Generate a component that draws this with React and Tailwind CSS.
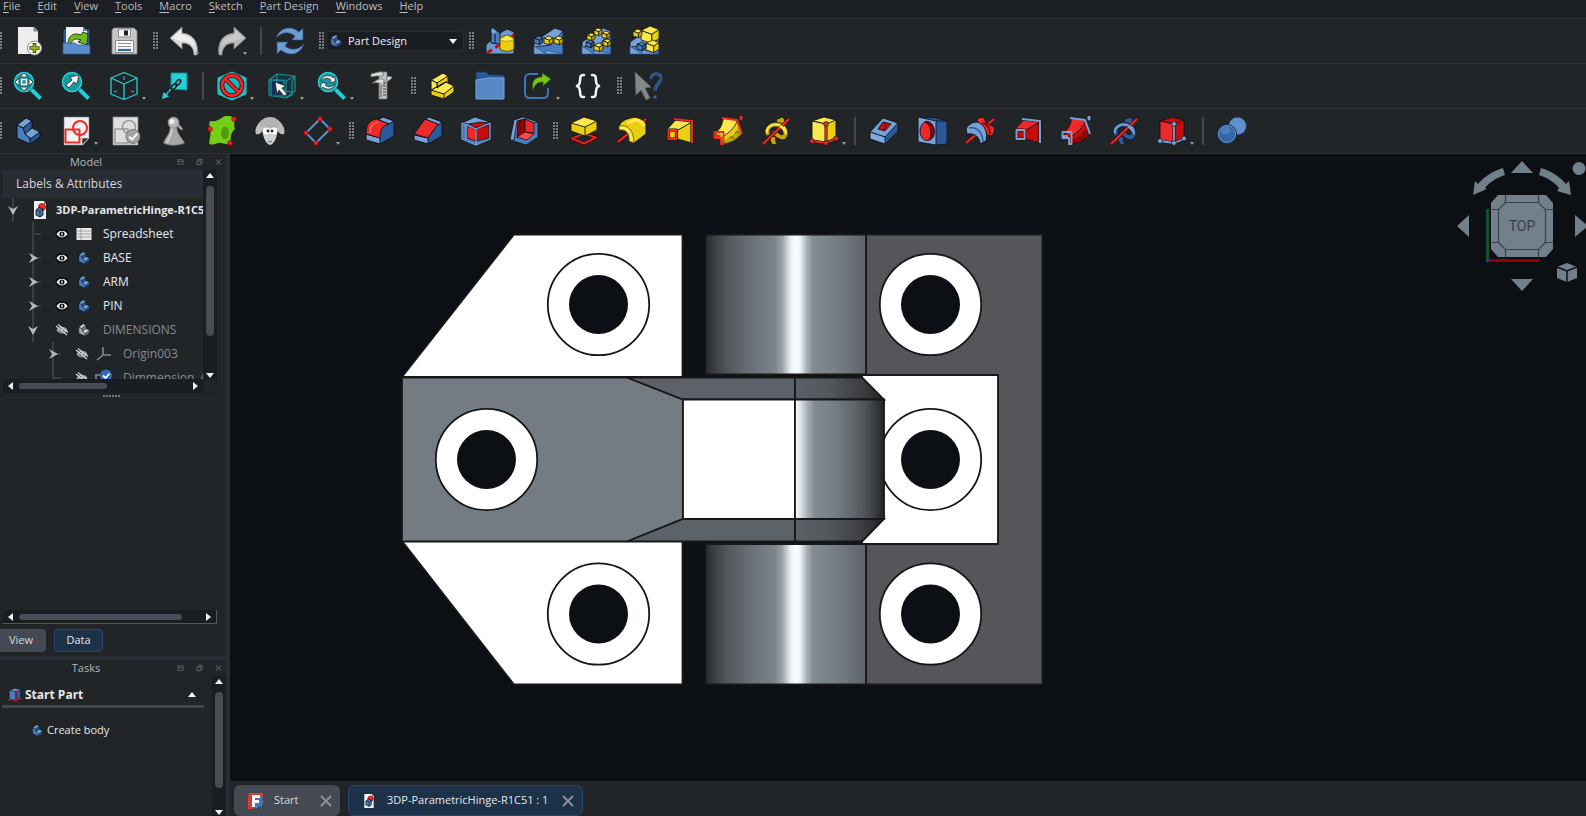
import React from "react";

const Y1 = "#fbe84e", Y2 = "#e9cf10", Y3 = "#c4a800";
const B1 = "#76a2d6", B2 = "#4a7dbd", B3 = "#2b5a9b";
const R1 = "#ef2929", R2 = "#c40c0c", R3 = "#960000";
const INK = "#10151c";
const CY = "#27cfd6";

const I = ({ children, box = 30, className = "h-[30px] w-[30px]" }) => (
  <svg viewBox={`0 0 ${box} ${box}`} className={className} fill="none" aria-hidden="true" strokeLinejoin="round">
    {children}
  </svg>
);

/* ---------- shared shapes ---------- */
const Page = ({ fill = "#f2f2f2" }) => (
  <>
    <path d="M3 1h25v21l-6 7H3z" fill={fill} stroke="#77797c" strokeWidth="0.6" />
    <path d="M28 22l-7 7v-7z" fill="#2f3336" stroke="#c9c9c9" strokeWidth="0.8" />
  </>
);
const Body = ({ a = B1, b = B2, c = B3 }) => (
  <g stroke={INK} strokeWidth="1">
    <path d="M4 9l9-7 6 3v7l8 4v4l-10 8-13-6z" fill={b} />
    <path d="M4 9l9-7 6 3-9 7z" fill={a} />
    <path d="M10 12l9-7v7l-7 6z" fill={c} />
    <path d="M12 18l7-6 8 4-9 7z" fill={a} />
    <path d="M17 23l10-7v5l-10 7z" fill={c} />
    <path d="M4 9l6 3 2 6 5 5v5L4 22z" fill={b} />
  </g>
);
const Box = ({ x, y, s, a, b, c }) => (
  <g stroke={INK} strokeWidth="0.8">
    <path d={`M${x} ${y + s * 0.25}l${s * 0.5} ${-s * 0.25} ${s * 0.5} ${s * 0.2}-${s * 0.4} ${s * 0.27}z`} fill={a} />
    <path d={`M${x} ${y + s * 0.25}l${s * 0.6} ${s * 0.22}v${s * 0.5}l-${s * 0.6}-${s * 0.2}z`} fill={b} />
    <path d={`M${x + s * 0.6} ${y + s * 0.47}l${s * 0.4}-${s * 0.27}v${s * 0.5}l-${s * 0.4} ${s * 0.27}z`} fill={c} />
  </g>
);
const Wedge = () => (
  <g stroke={INK} strokeWidth="0.8">
    <path d="M1 16L22 2l8 3v23H1z" fill={B2} />
    <path d="M1 16L22 2l8 3-12 14-17 2z" fill={B1} />
    <path d="M1 20l12 8H1zM13 24l17 4H13z" fill={B1} stroke={B3} />
  </g>
);
const Lens = ({ children }) => (
  <>
    <path d="M18.500 18.500l9 9" stroke="#0c5c66" strokeWidth="5" />
    <path d="M18.500 18.500l9 9" stroke={CY} strokeWidth="3.500" />
    <circle cx="11" cy="11" r="9.500" fill="#1898a2" stroke={CY} strokeWidth="1.600" />
    {children}
  </>
);

/* ---------- file / edit ---------- */
const NewDoc = () => (
  <I>
    <path d="M5 1h16l4 4v23H5z" fill="#ededed" />
    <path d="M21 1v4h4" fill="#9a9a9a" stroke="#555" strokeWidth="0.6" />
    <circle cx="21.500" cy="22" r="7" fill="#f7f7f7" stroke="#8a8a8a" />
    <path d="M21.500 17v10M16.500 22h10" stroke="#3c4a05" strokeWidth="3.600" />
    <path d="M21.500 18v8M17.500 22h8" stroke="#a0b810" strokeWidth="1.800" />
  </I>
);
const OpenDoc = () => (
  <I>
    <path d="M2 3h27v25H2z" fill={B3} stroke={INK} strokeWidth="0.8" />
    <path d="M5 1h17l4 4v14H5z" fill="#f1f1f1" />
    <path d="M22 1v4h4z" fill="#777" />
    <path d="M7 18C7 10 12 6 20 9l2-3 5 2-1 11-9-3 3-2c-5-2-9-1-10 4z" fill="#73b81a" stroke="#22420a" strokeWidth="1" />
    <path d="M2 17h12l3 2h12v9H2z" fill="#5b8dcb" stroke={B3} strokeWidth="0.8" />
  </I>
);
const Save = () => (
  <I>
    <path d="M5 2h20l3 3v23H3V4z" fill="#c6c6c6" stroke="#8b8b8b" strokeWidth="0.8" />
    <rect x="9.500" y="3" width="12" height="8" fill="#f4f4f4" stroke="#777" strokeWidth="0.8" />
    <rect x="15" y="4.500" width="4" height="5" fill="#222" />
    <rect x="6.500" y="14.500" width="18" height="12" fill="#fafafa" stroke="#8a8a8a" />
    <path d="M9 17.500h13M9 20.500h13" stroke="#8f8f8f" strokeWidth="1.200" />
    <path d="M9 24h13" stroke="#3568ab" strokeWidth="2.200" />
  </I>
);
const Undo = () => (
  <I>
    <path d="M1 12L13 1v6c11 1 17 9 15 22h-3c0-7-4-12-12-12v6z" fill="#d9d9d9" stroke="#8d8d8d" strokeWidth="0.8" />
    <path d="M3 12l9-8v5c8 0 13 5 14 13-3-5-7-7-14-7z" fill="#efefef" />
  </I>
);
const Redo = () => (
  <I>
    <path d="M29 12L17 1v6C6 8 0 16 2 29h3c0-7 4-12 12-12v6z" fill="#b9b9b9" stroke="#7d7d7d" strokeWidth="0.8" />
    <path d="M27 12l-9-8v5C10 9 5 14 4 22c3-5 7-7 14-7z" fill="#c9c9c9" />
  </I>
);
const Refresh = () => (
  <I>
    <g fill="#6d9bd2" stroke="#2a5288" strokeWidth="0.7">
      <path d="M1 12C5 1 16-1 24 6l4-4v12H17l3-4C13 5 7 6 1 12z" />
      <path d="M29 18C25 29 14 31 6 24l-4 4V16h11l-3 4c7 5 13 4 19-2z" />
    </g>
  </I>
);

/* ---------- workbench tools ---------- */
const Mirror = () => (
  <I>
    <path d="M1 19l5-5 9-7 7-4 7 3v22H1z" fill="#689ad2" stroke={INK} strokeWidth="0.8" />
    <path d="M7 1l4 3 4 3v11l-9-1V4z" fill={B2} stroke={INK} />
    <path d="M7 2l4 3-1 3-4-2z" fill={B1} />
    <path d="M10 8v9" stroke={INK} />
    <path d="M2 27L29 9" stroke={R2} strokeWidth="3" strokeDasharray="6 4" />
    <path d="M15 13c4-5 11-5 14 0v10c-3 3-11 3-14 0z" fill={Y2} stroke="#5a4b00" />
    <path d="M15 13l7-4 7 4c-2 3-12 3-14 0z" fill={Y1} stroke="#8a7500" strokeWidth="0.6" />
  </I>
);
const LinearPattern = () => (
  <I>
    <Wedge />
    <Box x={1} y={10} s={9} a={B2} b={B2} c={B3} />
    <Box x={11} y={10} s={9} a={Y1} b={Y2} c={Y3} />
    <Box x={21} y={10} s={9} a={Y1} b={Y2} c={Y3} />
  </I>
);
const PolarPattern = () => (
  <I>
    <Wedge />
    <Box x={13} y={2} s={8} a={Y1} b={Y2} c={Y3} />
    <Box x={6} y={7} s={8} a={Y1} b={Y2} c={Y3} />
    <Box x={21} y={5} s={8} a={Y1} b={Y2} c={Y3} />
    <Box x={22} y={13} s={8} a={Y1} b={Y2} c={Y3} />
    <Box x={5} y={14} s={8} a={B2} b={B2} c={B3} />
    <Box x={13} y={17} s={9} a={Y1} b={Y2} c={Y3} />
  </I>
);
const MultiTransform = () => (
  <I>
    <Wedge />
    <Box x={12} y={0} s={18} a={Y1} b={Y1} c={Y2} />
    <Box x={4} y={3} s={9} a={Y1} b={Y2} c={Y3} />
    <Box x={17} y={14} s={13} a={Y1} b={Y1} c={Y2} />
    <Box x={8} y={16} s={9} a={B2} b={B2} c={B3} />
  </I>
);

/* ---------- view ---------- */
const FitAll = () => (
  <I>
    <Lens>
      <path d="M11 2l4 4H7zM11 20l4-4H7zM2 11l4-4v8zM20 11l-4-4v8z" fill="#f4f4f4" stroke="#222" strokeWidth="0.8" />
      <path d="M8.500 8.500h5v5h-5z" fill="#1898a2" stroke="#f4f4f4" strokeWidth="1.500" />
    </Lens>
  </I>
);
const FitSel = () => (
  <I>
    <Lens>
      <path d="M18 4l-2 9-3-2-5 6-3-3 6-5-2-3z" fill="#f4f4f4" stroke="#222" strokeWidth="0.8" />
    </Lens>
  </I>
);
const Iso = () => (
  <I>
    <g stroke={CY} strokeWidth="1.300">
      <path d="M15 1.500l13 5.500v16L15 28.500 2 23V7z" />
      <path d="M2 7l13 6 13-6M15 13v15" />
      <path d="M15 5v4M8 20l-3 1M22 20l3 1" strokeWidth="1" />
    </g>
  </I>
);
const AlignSel = () => (
  <I>
    <path d="M12 2h16v17l-16-1z" fill={CY} stroke="#118a92" />
    <path d="M12 18l-6 7" stroke={CY} strokeWidth="1.500" />
    <path d="M13 17l-5 6" stroke="#0c4a52" strokeWidth="1" strokeDasharray="2 2" />
    <ellipse cx="19" cy="11.500" rx="1.800" ry="3.500" transform="rotate(42 19 11.500)" stroke="#111" strokeWidth="1.300" />
    <ellipse cx="15" cy="15.500" rx="1.800" ry="3.500" transform="rotate(42 15 15.500)" stroke="#111" strokeWidth="1.300" />
    <path d="M3 28l1.500-7 5.500 4.500z" fill={CY} />
  </I>
);
const DrawStyle = () => (
  <I>
    <path d="M15 1l14 6v16l-14 6L1 23V7z" fill="#1fb5bd" stroke={CY} />
    <circle cx="15" cy="14.500" r="10" stroke="#3a0000" strokeWidth="4.500" />
    <path d="M8 7.500l14 14" stroke="#3a0000" strokeWidth="4" />
    <circle cx="15" cy="14.500" r="10" stroke={R1} strokeWidth="2.800" />
    <path d="M8 7.500l14 14" stroke={R1} strokeWidth="2.600" />
  </I>
);
const SelView = () => (
  <I>
    <g stroke="#1c8f97" strokeWidth="1.200">
      <path d="M2 9l8-6 18 2-3 6v13l-6 3-17-3z" fill="#12343c" />
      <path d="M4 9h13v16H4z" fill="#15305e" />
      <path d="M2 9l17 1 9-5M19 10v17M10 3v16l15 2M28 5v15l-9 7" />
    </g>
    <path d="M8 11l11 4-4 2 5 6-3 2-5-6-2 4z" fill="#f2f2f2" stroke="#111" strokeWidth="0.7" />
  </I>
);
const SyncView = () => (
  <I>
    <Lens>
      <path d="M4 10c1-6 9-7 12-3l2-2v6h-6l2-2c-3-3-7-2-10 1zM18 13c-1 5-8 7-12 3l-2 2v-6h6l-2 2c3 3 7 2 10-1z" fill="#f4f4f4" stroke="#222" strokeWidth="0.7" />
    </Lens>
  </I>
);
const Caliper = () => (
  <I>
    <path d="M12 1h8v27h-8z" fill="#c4c4c4" stroke="#6f6f6f" strokeWidth="0.8" />
    <path d="M4 3l8-2h4v4H9L4 6zM5 12l7-4h5v7c-3-3-7-4-12-3zM20 5l5 1v1l-5 4z" fill="#dcdcdc" stroke="#6f6f6f" strokeWidth="0.8" />
    <path d="M14 14v12" stroke="#555" />
    <path d="M16 12h3M16 15h3M16 18h3M16 21h3M16 24h3" stroke="#444" />
  </I>
);
const PartIcon = () => (
  <I>
    <g stroke={INK} strokeWidth="1">
      <path d="M4 9l12-7 5 3v10L10 19l-6-3z" fill={Y2} />
      <path d="M4 9l12-7 5 3-11 7z" fill={Y1} />
      <path d="M10 12v7" />
      <path d="M4 19l15-8 8 4v6l-10 7-13-4z" fill={Y2} />
      <path d="M4 19l15-8 8 4-10 8z" fill={Y1} />
      <path d="M17 23v5" />
      <path d="M4 9l6 3v5l9-6-2 1-13 7z" fill={Y1} />
    </g>
  </I>
);
const Folder = () => (
  <I>
    <path d="M1 1h10l3 3h15v6H1z" fill={B3} stroke="#173763" />
    <path d="M1 9l13-2h15v21H1z" fill="#5788c5" stroke="#7aa7dd" strokeWidth="1" />
  </I>
);
const LinkIcon = () => (
  <I>
    <path d="M15 3H7c-3 0-5 2-5 5v14c0 3 2 5 5 5h13c3 0 5-2 5-5v-5" stroke="#4574b3" strokeWidth="2" />
    <path d="M10 19C8 10 12 6 19 6V2l9 6-8 7v-4c-5 0-8 2-10 8z" fill="#78c51b" stroke="#2c5a06" strokeWidth="0.8" />
  </I>
);
const Braces = () => (
  <I>
    <g stroke="#f2f2f2" strokeWidth="2.600" strokeLinecap="round">
      <path d="M11 4C4 3 10 13 4 15c6 2 0 12 7 11" />
      <path d="M19 4c7-1 1 9 7 11-6 2 0 12-7 11" />
    </g>
  </I>
);
const WhatsThis = () => (
  <I>
    <path d="M2 1l16 15-6 1 5 10-4 2-5-10-5 5z" fill="#85878a" stroke="#5f6265" strokeWidth="0.8" />
    <path d="M18 8c0-7 11-7 10 0-1 5-6 5-6 12M22 24.500v3" stroke="#3c69a8" strokeWidth="3" />
    <path d="M18 8c0-7 11-7 10 0-1 5-6 5-6 12" stroke="#11294c" strokeWidth="0.8" />
  </I>
);

/* ---------- part design ---------- */
const BodyIcon = () => (<I><Body /></I>);
const Sketch = () => (
  <I>
    <Page />
    <rect x="4.500" y="13.500" width="14" height="13" stroke={R1} strokeWidth="2" />
    <circle cx="19" cy="12" r="7" stroke={R1} strokeWidth="2" />
  </I>
);
const Validate = () => (
  <I>
    <path d="M2 1h25v28H2z" fill="#dedede" stroke="#8b8b8b" strokeWidth="0.7" />
    <rect x="4" y="13" width="13" height="14" stroke="#9a9a9a" strokeWidth="1.600" />
    <circle cx="18" cy="11" r="6.500" stroke="#9a9a9a" strokeWidth="1.600" />
    <circle cx="22" cy="20.500" r="7" fill="#a2a2a2" stroke="#777" />
    <path d="M18 20.500l3 3 5.500-6" stroke="#f4f4f4" strokeWidth="2.200" />
  </I>
);
const Pawn = () => (
  <I>
    <path d="M11 10C12 18 6 21 4.500 27c5 3 15 3 21 0C23 21 17 18 18 10l4 4 2-1-5-6z" fill="#a7a7a7" stroke="#777" strokeWidth="0.7" />
    <path d="M13 12c0 8-4 10-5 15" stroke="#cfcfcf" strokeWidth="2" />
    <circle cx="14.500" cy="6.500" r="5.500" fill="#b7b7b7" stroke="#808080" strokeWidth="0.7" />
    <circle cx="13" cy="5.500" r="2.500" fill="#efefef" />
  </I>
);
const SubShape = () => (
  <I>
    <path d="M3 5c5 1 9-1 13-4 3-2 8-1 12 1-1 5-1 9 0 11-4 3-5 8-4 15-6 1-9-2-13-1-3 1-7 3-9 0 1-5 2-9 1-14C2 10 2 8 3 5z" fill="#73cf16" />
    <ellipse cx="18" cy="17" rx="4" ry="6.500" fill="#56980f" />
    <g fill={R1} stroke={R3} strokeWidth="0.8">
      <circle cx="27" cy="3" r="2.300" /><circle cx="3" cy="13" r="2.300" /><circle cx="23" cy="27" r="2.300" />
    </g>
  </I>
);
const Sheep = () => (
  <I>
    <path d="M7 4c-4 3-8 9-6 14 3 1 6-1 7-5zM23 4c4 3 8 9 6 14-3 1-6-1-7-5z" fill="#bdbdbd" />
    <path d="M7 10c0 8 3 18 8 19 5-1 8-11 8-19z" fill="#cfcfcf" />
    <path d="M6 10C4 4 10 1 15 1s11 3 9 9c-2 3-4 1-5 2-2-1-3 1-5 0-3 1-6 1-8-2z" fill="#b3b3b3" />
    <circle cx="11.500" cy="15" r="3.500" fill="#fff" /><circle cx="18.500" cy="15" r="3.500" fill="#fff" />
    <circle cx="13" cy="15" r="1.400" fill="#222" /><circle cx="17" cy="15" r="1.400" fill="#222" />
    <path d="M13 25l2 1 2-1" stroke="#666" />
  </I>
);
const Datum = () => (
  <I>
    <path d="M17 3l10 10-14 14L3 17z" stroke="#5f93d4" strokeWidth="1.800" />
    <g fill={R1} stroke={R3} strokeWidth="0.8">
      <circle cx="17" cy="3" r="2.200" /><circle cx="27" cy="13" r="2.200" /><circle cx="13" cy="27" r="2.200" /><circle cx="3" cy="17" r="2.200" />
    </g>
  </I>
);
const Fillet = () => (
  <I>
    <g stroke={INK} strokeWidth="1">
      <path d="M1 18v6l14 4 14-8V6l-12-5-9 4z" fill={B3} />
      <path d="M1 18v6l14 4v-6z" fill={B1} />
      <path d="M13 4l5-3 11 4-5 3z" fill={B1} />
      <path d="M1 18C1 9 4 4 12 3l12 5c-6 1-9 6-9 14z" fill={R1} />
    </g>
    <path d="M5 17c0-6 3-10 8-11" stroke="#ff6a60" strokeWidth="1.500" />
  </I>
);
const Chamfer = () => (
  <I>
    <g stroke={INK} strokeWidth="1">
      <path d="M1 19v5l14 4 14-8V6l-12-5z" fill={B3} />
      <path d="M1 19v5l14 4v-6z" fill={B1} />
      <path d="M12 3l4-2 13 5-4 3z" fill={B1} />
      <path d="M1 18L12 3l13 5-10 14z" fill={R1} />
    </g>
  </I>
);
const Draft = () => (
  <I>
    <g stroke={INK} strokeWidth="0.8">
      <path d="M1 7l13-6 15 5v17l-14 6L1 23z" fill={B2} />
      <path d="M1 7l13-6 15 5-14 3z" fill={B1} />
      <path d="M8 8l11-2 9 1-13 5z" fill={R2} />
      <path d="M6 10l9 3v12l-9-3z" fill={R1} />
      <path d="M15 13l13-4v13l-13 3z" fill={R2} />
    </g>
    <path d="M1 7l14 6 14-6M15 13v16M1 7v16l14 6 14-6V7M5 9v15" stroke={B1} strokeWidth="1.300" />
  </I>
);
const Thickness = () => (
  <I>
    <g stroke={INK} strokeWidth="0.8">
      <path d="M5 4l9-3 15 5v15l-12 8L1 24z" fill={B2} />
      <path d="M5 4l9-3 15 5-4 1-9-4-8 2-3 19-4 0z" fill={B1} />
      <path d="M9 5l7-2v13l-8 6z" fill={R3} />
      <path d="M16 3l9 4v10l-9-1z" fill={R1} />
      <path d="M8 21l8-5 9 2-7 6z" fill="#ff4a42" />
    </g>
  </I>
);
const Pad = () => (
  <I>
    <path d="M15 17l13 4-13 7-13-5z" stroke="#5b0000" strokeWidth="3" />
    <path d="M15 17.500l12 4-12 6-12-5z" stroke={R1} strokeWidth="1.600" />
    <g stroke={INK} strokeWidth="0.9">
      <path d="M2 7l13-6 13 4v9l-12 6-14-5z" fill={Y2} />
      <path d="M2 7l13-6 13 4-12 6z" fill={Y1} /><path d="M16 11v9" />
    </g>
  </I>
);
const Revolve = () => (
  <I>
    <path d="M1 26L29 3" stroke="#5b0000" strokeWidth="3.200" />
    <path d="M1 26L29 3" stroke={R1} strokeWidth="2" />
    <path d="M2 10C4 6 7 4 10 3l7-2c7 1 11 4 12 7v10l-12 9-5-2c1-7-3-12-10-11z" fill={Y2} stroke={INK} />
    <path d="M10 7l9-3c4 1 7 3 8 6" stroke={Y1} strokeWidth="3" />
    <path d="M2 10c9-2 15 5 15 17l-5-2c1-7-3-12-10-11z" fill={Y1} stroke="#5f5000" strokeWidth="0.8" />
  </I>
);
const Loft = ({ a = Y1, b = Y2, s = R1 }) => (
  <I>
    <path d="M3 14L12 3l15 2v22l-14-4H3z" fill={b} stroke={INK} strokeWidth="0.8" />
    <path d="M3 13l9-10 14 3-13 8z" fill={a} />
    <path d="M13 14L27 6" stroke={INK} />
    <path d="M9 3l18 2v22" stroke={INK} strokeWidth="3.200" />
    <path d="M9 3l18 2v22" stroke={s} strokeWidth="2" />
    <rect x="3.500" y="14" width="8" height="9" fill={b} stroke={INK} strokeWidth="3.200" />
    <rect x="3.500" y="14" width="8" height="9" stroke={s} strokeWidth="2" />
  </I>
);
const Pipe = ({ a = Y1, b = Y2, c = Y3, s = R1 }) => (
  <I>
    <path d="M2 17C7 14 9 9 10 2l14 2 5 14c-5 4-8 9-19 10z" fill={c} stroke={INK} strokeWidth="0.8" />
    <path d="M11 20C17 16 21 11 23 5l2 6c-2 6-6 10-14 13z" fill={b} />
    <path d="M4 16c4-3 6-7 7-13l13 2c-2 6-6 11-14 15z" fill={a} />
    <path d="M11 20C17 16 22 11 24 5" stroke={INK} strokeWidth="0.8" />
    <path d="M16 22c2-2 5-1 4 1M22 17c2-2 5-1 4 1" stroke="#3d3410" strokeWidth="0.8" />
    <path d="M9 2l15 2 5 14" stroke={s} strokeWidth="2" />
    <path d="M1.500 16h9v12H8v-6H1.500zM2 20h5" stroke={s} strokeWidth="1.800" />
    <ellipse cx="28" cy="2" rx="1.500" ry="2.500" fill={s} />
  </I>
);
const Helix = ({ a = Y1, b = Y3 }) => (
  <I>
    <path d="M10 20l5 1c-1 3 0 6 1 7l-4 1c-3-3-3-6-2-9zM16 3l6-2 2 4-5 5-4-2z" fill={b} stroke={INK} strokeWidth="0.8" />
    <path d="M7 19C4 11 12 7 18 9c7 2 8 9 5 12-4 1-8-2-10-6" stroke={INK} strokeWidth="5.500" />
    <path d="M7 19C4 11 12 7 18 9c7 2 8 9 5 12-4 1-8-2-10-6" stroke={b} strokeWidth="4" />
    <path d="M6 17C5 11 12 7 18 9c5 1 7 5 7 9" stroke={a} strokeWidth="2" />
    <path d="M2 28L28 3" stroke="#5b0000" strokeWidth="3.200" />
    <path d="M2 28L28 3" stroke={R1} strokeWidth="2" />
    <path d="M19 10c2 1 4 3 5 5" stroke={a} strokeWidth="3" />
  </I>
);
const Prim = ({ a = Y1, b = Y2, c = Y1, s = R1 }) => (
  <I>
    <g stroke={INK} strokeWidth="0.9">
      <path d="M3 5l12-4 12 3v19l-10 4-14-3z" fill={b} />
      <path d="M3 5l12-4 12 3-10 4z" fill={c} /><path d="M3 5l14 3v19L3 24z" fill={a} />
    </g>
    <path d="M17 8v18M3 25l14 2 10-4" stroke={INK} strokeWidth="3" />
    <path d="M17 8v18M3 25l14 2 10-4" stroke={s} strokeWidth="1.800" />
    <g fill={s} stroke={INK} strokeWidth="0.7">
      <circle cx="17" cy="8" r="2.400" /><circle cx="3" cy="25" r="2.400" /><circle cx="17" cy="27" r="2.400" /><circle cx="27" cy="22.500" r="2.400" />
    </g>
  </I>
);
const Pocket = () => (
  <I>
    <g stroke={INK} strokeWidth="0.9">
      <path d="M1 18L14 2l15 5v8L16 28 1 23z" fill={B3} />
      <path d="M1 16L14 2l15 5-13 14z" fill={B1} />
      <path d="M1 16l15 5v7L1 23z" fill="#82aade" />
      <path d="M9 13l5-7 8 2-6 7z" fill={R2} /><path d="M16 6l1 4-3 4" />
    </g>
  </I>
);
const Hole = () => (
  <I>
    <g stroke={INK} strokeWidth="0.9">
      <path d="M1 1l18 1 11 3v23l-10 1L1 26z" fill={B3} />
      <path d="M1 1l18 4v24L1 26z" fill={B1} />
      <ellipse cx="10" cy="15" rx="7" ry="9.500" fill={R1} />
      <path d="M8 6c7 4 7 13 4 18 5-1 6-7 5-11-1-4-4-8-9-7z" fill={R3} />
      <path d="M19 5h11" />
    </g>
  </I>
);
const Groove = () => (
  <I>
    <path d="M1 27L29 3" stroke="#5b0000" strokeWidth="3.200" />
    <path d="M1 27L29 3" stroke={R1} strokeWidth="2" />
    <path d="M12 4c2-3 5-3 7-2l2 5 8 4c1 4 0 7-3 9l-8-3-6-6z" fill={R1} stroke={INK} strokeWidth="0.8" />
    <path d="M17 7c5 1 8 5 8 11" stroke={R3} strokeWidth="2" />
    <path d="M1 13C3 9 7 6 12 6c8 2 11 11 9 19l-6 3c0-7-5-11-13-10z" fill={B1} stroke={INK} />
    <path d="M4 12c8-2 14 5 14 14" stroke={B3} strokeWidth="1.500" />
  </I>
);
const Boolean2 = () => (
  <I>
    <circle cx="20.500" cy="10" r="9" fill="#5e90cd" stroke="#16335c" strokeWidth="0.8" />
    <circle cx="10" cy="18" r="9.500" fill={B3} stroke="#122a4d" />
    <circle cx="10" cy="18" r="8.500" fill="#3566a8" stroke={B1} strokeWidth="0.8" />
    <ellipse cx="8.500" cy="14.500" rx="5" ry="4" fill="#4a7dbd" />
  </I>
);

/* ---------- toolbar parts ---------- */
const Grip = ({ edge }) => (
  <svg className={edge ? "h-[18px] w-1 shrink-0" : "ml-[5px] mr-px h-[18px] w-1.5 shrink-0"} viewBox={edge ? "3 0 4 18" : "0 0 6 18"} aria-hidden="true">
    {[0, 3, 6, 9, 12, 15].map((y) => (
      <g key={y} fill="#7b7f83">
        <rect x="0" y={y} width="2" height="2" />
        <rect x="3" y={y} width="2" height="2" />
      </g>
    ))}
  </svg>
);
const Sep = () => <div className="mx-1 h-7 w-0.5 shrink-0 bg-[#43474b]" />;
const Tool = ({ icon: Icon, label, menu, overlay }) => (
  <button type="button" aria-label={label} className={`relative flex h-10 shrink-0 items-center ${menu ? "w-[50px]" : "w-12"}`}>
    <span className="flex w-12 justify-center"><Icon /></span>
    {(menu || overlay) && (
      <svg viewBox="0 0 4 3" className={`absolute bottom-1.5 h-[3px] w-1 ${menu ? "right-1" : "right-[9px]"}`} aria-hidden="true">
        <path d="M0 0h4L2 3z" fill="#9a9da0" />
      </svg>
    )}
  </button>
);
const YLoft = () => <Loft />;
const RLoft = () => <Loft a={R1} b={R2} s={B1} />;
const RPipe = () => <Pipe a={R1} b={R2} c={R3} s={B1} />;
const YPipe = () => <Pipe />;
const YHelix = () => <Helix />;
const BHelix = () => <Helix a={B1} b={B3} />;
const YPrim = () => <Prim />;
const RPrim = () => <Prim a={R1} b={R2} c={R2} s={B1} />;

const Row = ({ items, children }) => (
  <div className="flex h-[45px] shrink-0 items-center border-b border-[#2d3135] bg-[#212528]" role="toolbar">
    {items.map((it, i) => {
      if (it === "grip") return <Grip key={i} />;
      if (it === "edge") return <Grip key={i} edge />;
      if (it === "sep") return <Sep key={i} />;
      if (it === "slot") return <React.Fragment key={i}>{children}</React.Fragment>;
      return <Tool key={i} icon={it[0]} label={it[1]} menu={it[2] === "m"} overlay={it[2] === "o"} />;
    })}
  </div>
);

const row1 = ["edge", [NewDoc, "New"], [OpenDoc, "Open"], [Save, "Save"], "grip", [Undo, "Undo", "o"], [Redo, "Redo", "o"], "sep", [Refresh, "Refresh"], "grip", "slot", "grip",
  [Mirror, "Mirror"], [LinearPattern, "Linear pattern"], [PolarPattern, "Polar pattern"], [MultiTransform, "Multi-transform"]];
const row2 = ["edge", [FitAll, "Fit all"], [FitSel, "Fit selection"], [Iso, "Isometric", "m"], [AlignSel, "Align to selection"], "sep", [DrawStyle, "Draw style", "m"], [SelView, "Selection view", "m"],
  [SyncView, "Sync view", "m"], [Caliper, "Measure"], "grip", [PartIcon, "Create part"], [Folder, "Create group"], [LinkIcon, "Make link", "m"], [Braces, "Expressions"], "grip", [WhatsThis, "What's this?"]];
const row3 = ["edge", [BodyIcon, "Create body"], [Sketch, "Create sketch", "m"], [Validate, "Validate sketch"], [Pawn, "Check geometry"], [SubShape, "Shape binder"], [Sheep, "Clone"], [Datum, "Datum", "m"], "grip",
  [Fillet, "Fillet"], [Chamfer, "Chamfer"], [Draft, "Draft"], [Thickness, "Thickness"], "grip", [Pad, "Pad"], [Revolve, "Revolution"], [YLoft, "Additive loft"], [YPipe, "Additive pipe"], [YHelix, "Additive helix"],
  [YPrim, "Additive primitive", "m"], "sep", [Pocket, "Pocket"], [Hole, "Hole"], [Groove, "Groove"], [RLoft, "Subtractive loft"], [RPipe, "Subtractive pipe"], [BHelix, "Subtractive helix"],
  [RPrim, "Subtractive primitive", "m"], "sep", [Boolean2, "Boolean operation"]];

/* ---------- side panel ---------- */
const Tri = ({ d, className = "" }) => (
  <svg viewBox="0 0 8 8" className={`h-2 w-2 shrink-0 ${className}`} aria-hidden="true">
    <path d={{ up: "M0 6l4-5 4 5z", down: "M0 2l4 5 4-5z", left: "M6 0L1 4l5 4z", right: "M2 0l5 4-5 4z" }[d]} fill="#f1f2f3" />
  </svg>
);
const VBar = ({ thumb }) => (
  <div className="flex w-3.5 shrink-0 flex-col items-center justify-between bg-[#1a1d21] pt-0.5">
    <Tri d="up" />
    <div className="flex w-2 grow flex-col pb-5 pt-1.5"><div className={`rounded-full bg-[#484d55] ${thumb}`} /></div>
    <Tri d="down" />
  </div>
);
const HBar = ({ thumb, className = "" }) => (
  <div className={`flex h-3.5 shrink-0 items-center bg-[#1a1d21] px-1 ${className}`}>
    <Tri d="left" />
    <div className="flex h-1.5 grow px-1"><div className={`rounded-full bg-[#484d55] ${thumb}`} /></div>
    <Tri d="right" />
  </div>
);
const DockTitle = ({ title }) => (
  <div className="relative flex h-4 shrink-0 items-center">
    <h2 className="w-[172px] text-center text-[11px] leading-4 text-[#b3b7bc]">{title}</h2>
    <div className="absolute right-1 flex gap-3 text-[#55595d]">
      {["M1 1.500h6v5H1zM1 3.500h6", "M3 2.500V1h4v4H5.500M1 3h4.500v4H1z", "M1 1l6 6M7 1L1 7"].map((d) => (
        <button type="button" key={d} aria-label={`${title} panel control`} className="w-[7px]">
          <svg viewBox="0 0 8 8" className="h-2 w-[7px]" fill="none" stroke="currentColor" strokeWidth="1.200"><path d={d} /></svg>
        </button>
      ))}
    </div>
  </div>
);
const Expander = ({ kind, line }) => (
  <svg viewBox="0 0 20 24" className="h-6 w-5 shrink-0" aria-hidden="true" fill="none">
    <path d={line} stroke="#3a3e42" strokeWidth="2" />
    {kind === "open" && <path d="M5 8l5 3 5-3-5 9z" fill="#b5b8bb" />}
    {kind === "closed" && <path d="M6 7l9 5-9 5 3-5z" fill="#b5b8bb" />}
  </svg>
);
const Eye = ({ off }) => (
  <svg viewBox="0 0 16 16" className="h-4 w-4 shrink-0" aria-hidden="true">
    <ellipse cx="8" cy="8" rx="6.500" ry="4.800" fill={off ? "none" : "#050505"} />
    <path d="M2.500 8C5 3.500 11 3.500 13.500 8 11 12.500 5 12.500 2.500 8z" fill={off ? "#a9abad" : "#fff"} />
    <circle cx="8" cy="8" r="2.600" fill={off ? "#55585b" : "#050505"} />
    <path d="M8 6.500v3" stroke="#fff" strokeWidth="1.200" />
    {off && <path d="M2 4l11 9M4 2.500l10 8" stroke="#d6d7d8" strokeWidth="1.200" />}
  </svg>
);
const SmallBody = ({ grey, className = "h-3.5 w-3.5" }) => (
  <I className={className}>{grey ? <Body a="#d2d2d2" b="#a9a9a9" c="#7d7d7d" /> : <Body />}</I>
);
const DocIcon = ({ className }) => (
  <svg viewBox="0 0 16 18" className={className} aria-hidden="true">
    <path d="M2 0h10l2 3v15H2z" fill="#f1f1f1" />
    <path d="M12 0v3h2z" fill="#777" />
    <circle cx="10" cy="6" r="3.500" fill={R1} stroke={R3} strokeWidth="0.700" />
    <path d="M4 9l3-2.500L11 8v6l-3 2-4-2z" fill={B2} stroke={INK} strokeWidth="0.900" />
    <path d="M4 9l4 1.200L11 8M8 10v6" stroke={INK} strokeWidth="0.700" fill="none" />
  </svg>
);
const SheetIcon = () => (
  <svg viewBox="0 0 16 14" className="h-3.5 w-4" aria-hidden="true">
    <rect x="0.500" y="1" width="15" height="12" fill="#e8e8e8" />
    <path d="M0 4h16M0 7h16M0 10h16M5 1v12" stroke="#8f9295" strokeWidth="0.800" />
  </svg>
);
const OriginIcon = () => (
  <svg viewBox="0 0 16 16" className="h-4 w-4" fill="none" aria-hidden="true">
    <path d="M7 1v8h8M7 9l-6 5" stroke="#84878a" strokeWidth="1.600" />
  </svg>
);
const DimIcon = () => (
  <svg viewBox="0 0 18 18" className="h-[18px] w-[18px] shrink-0" fill="none" aria-hidden="true">
    <path d="M6 6H1v8" stroke="#84878a" strokeWidth="1.600" />
    <circle cx="11" cy="6.500" r="6" fill="#3169b4" />
    <path d="M8 6.500l2.500 2.500 4-4.500" stroke="#fff" strokeWidth="1.800" />
  </svg>
);
const TreeRow = ({ depth, kind, line, off, icon, children }) => (
  <li className="flex h-6 items-center">
    <span className={depth === 2 ? "w-10 shrink-0" : "w-5 shrink-0"} />
    <Expander kind={kind} line={line} />
    <span className="ml-[11px] flex shrink-0"><Eye off={off} /></span>
    <span className="ml-1.5 flex w-4 shrink-0 justify-center">{icon}</span>
    <span className={`ml-[11px] whitespace-nowrap ${off ? "text-[#858c94]" : "text-[#e6e8ea]"}`}>{children}</span>
  </li>
);

/* ---------- 3D view ---------- */
const Ring = ({ x, y, fill = "#fff" }) => (
  <g>
    <circle cx={x} cy={y} r="50.700" fill={fill} stroke="#151618" strokeWidth="1.800" />
    <circle cx={x} cy={y} r="29.500" fill="#0c0f14" />
  </g>
);
const Model = () => (
  <svg viewBox="230 154 1356 627" className="h-full w-full" preserveAspectRatio="xMidYMid meet" role="img" aria-label="Hinge model">
    <defs>
      <linearGradient id="cyl" gradientUnits="userSpaceOnUse" x1="705" y1="0" x2="866" y2="0">
        <stop offset="0" stopColor="#27292c" /><stop offset="0.060" stopColor="#3d4043" /><stop offset="0.140" stopColor="#535759" />
        <stop offset="0.220" stopColor="#60656c" /><stop offset="0.320" stopColor="#6e757d" /><stop offset="0.430" stopColor="#7b8289" />
        <stop offset="0.480" stopColor="#9aa2a8" /><stop offset="0.530" stopColor="#e6edf2" /><stop offset="0.560" stopColor="#fbfeff" />
        <stop offset="0.590" stopColor="#eef5fb" /><stop offset="0.630" stopColor="#abb5b8" /><stop offset="0.670" stopColor="#838b92" />
        <stop offset="0.820" stopColor="#757d85" /><stop offset="1" stopColor="#5f626a" />
      </linearGradient>
      <linearGradient id="knuckle" gradientUnits="userSpaceOnUse" x1="795" y1="0" x2="884" y2="0">
        <stop offset="0" stopColor="#fbfeff" /><stop offset="0.060" stopColor="#dde5ea" /><stop offset="0.140" stopColor="#a7b0b6" />
        <stop offset="0.220" stopColor="#838b92" /><stop offset="0.450" stopColor="#757d85" /><stop offset="0.650" stopColor="#62666e" />
        <stop offset="0.820" stopColor="#4b4e51" /><stop offset="1" stopColor="#232527" />
      </linearGradient>
      <linearGradient id="bevel" gradientUnits="userSpaceOnUse" x1="795" y1="0" x2="884" y2="0">
        <stop offset="0" stopColor="#5d6168" /><stop offset="0.400" stopColor="#53565a" /><stop offset="0.750" stopColor="#3c3e41" /><stop offset="1" stopColor="#222426" />
      </linearGradient>
    </defs>
    <g stroke="#17181a" strokeWidth="1.800">
      <path d="M514 234.500h168.500V377H402z" fill="#fff" />
      <path d="M402 541h280.500v143.500H514z" fill="#fff" />
      <path d="M866 234.500h176.500v450H866z" fill="#54565a" />
      <path d="M705.500 234.500H866v140H705.500zM705.500 544H866v140.500H705.500z" fill="url(#cyl)" />
      <path d="M862 375h136v169H862z" fill="#fff" />
    </g>
    <Ring x={598.5} y={304.5} />
    <Ring x={598.5} y={614} />
    <Ring x={930.5} y={304.5} />
    <Ring x={930.5} y={459.5} />
    <Ring x={930.5} y={614} />
    <g stroke="#17181a" strokeWidth="1.800">
      <path d="M402 377.500H627l56 22V519l-56 22.500H402z" fill="#757b83" />
      <path d="M627 377.500h168v22H683zM627 541.500h168V519H683z" fill="#5d6168" />
      <path d="M795 377.500h67l22 22h-89zM795 541.500h67l22-22.500h-89z" fill="url(#bevel)" />
      <path d="M683 399.500h112V519H683z" fill="#fff" />
      <path d="M795 399.500h89V519h-89z" fill="url(#knuckle)" />
    </g>
    <Ring x={486.5} y={459.5} />
  </svg>
);
const NavCube = () => (
  <svg viewBox="1430 154 156 146" className="absolute right-0 top-0 h-[146px] w-[156px]" role="img" aria-label="Navigation cube">
    <g fill="#72808c">
      <path d="M1522 161l11 12h-22zM1522 291l11-12h-22zM1457 226l12-11v22zM1588 226l-13-11v22z" />
      <circle cx="1579" cy="168.500" r="6.500" />
      <path d="M1503 168l2 7c-9 3-15 7-20 13l2 1-14 6 2-14 3 3c7-8 15-13 25-16zM1541 168l-2 7c9 3 15 7 20 13l-2 3 14 4-2-14-3 3c-7-8-15-13-25-16z" />
      <path d="M1498 195h48l7 8v46l-7 8h-48l-7-8v-46z" />
    </g>
    <g fill="none" stroke="#3a4249" strokeWidth="1.200">
      <path d="M1505.500 202.500h33l7 7v33l-7 7h-33l-7-7v-33zM1505.500 202.500V195M1538.500 202.500V195M1505.500 249.500v8M1538.500 249.500v8M1498.500 209.500h-7M1498.500 242.500h-7M1545.500 209.500h8M1545.500 242.500h8" />
    </g>
    <text x="1522" y="231" textAnchor="middle" fontSize="14" fill="#3a4249" fontFamily="Roboto, sans-serif">TOP</text>
    <path d="M1487.500 209v51" stroke="#14502a" strokeWidth="3" />
    <path d="M1488 260.500h51" stroke="#9b0404" strokeWidth="2.500" />
    <path d="M1486 259h3v3h-3z" fill="#1c3f9b" />
    <path d="M1567 263l10 4v11l-10 4-10-4v-11z" fill="#72808c" />
    <path d="M1557 267l10 4 10-4M1567 271v11" fill="none" stroke="#0c0f14" strokeWidth="1.500" />
  </svg>
);

const menus = ["File", "Edit", "View", "Tools", "Macro", "Sketch", "Part Design", "Windows", "Help"];

export default function App() {
  return (
    <div className="flex h-screen flex-col overflow-hidden bg-[#212528] font-['Open_Sans','Noto_Sans',sans-serif] text-[12px] text-[#e6e8ea]">
      <nav className="flex h-[19px] shrink-0 items-start gap-[17px] border-b border-[#2d3135] bg-[#1b1e22] pl-[3px] text-[11px] leading-3 text-[#b9bdc1]">
        {menus.map((m) => (
          <a key={m} href={`#${m}`} className="whitespace-nowrap">
            <span className="underline underline-offset-2">{m[0]}</span>{m.slice(1)}
          </a>
        ))}
      </nav>
      <Row items={row1}>
        <label className="relative flex h-5 w-[138px] shrink-0 items-center rounded-sm border border-[#2b2f34] bg-[#1a1d21]">
          <span className="sr-only">Workbench</span>
          <span className="absolute left-0.5 flex"><SmallBody /></span>
          <select className="h-full w-full appearance-none bg-transparent pl-[21px] text-[11px] leading-4 text-[#eceef0]" defaultValue="Part Design">
            <option>Part Design</option>
          </select>
          <span className="absolute right-1.5 flex"><Tri d="down" /></span>
        </label>
      </Row>
      <Row items={row2} />
      <Row items={row3} />

      <div className="flex min-h-0 grow">
        <aside className="flex w-[230px] shrink-0 flex-col border-r-4 border-[#282c33]">
          <section className="flex min-h-0 grow flex-col">
            <DockTitle title="Model" />
            <div className="ml-[3px] flex h-[209px] w-[214px] shrink-0">
              <div className="min-w-0 grow overflow-hidden">
                <div className="flex h-7 items-center bg-[#282c33] pl-[13px] text-[#d5d8db]">Labels &amp; Attributes</div>
                <ul>
                  <li className="flex h-6 items-center">
                    <Expander kind="open" line="M10 0v24" />
                    <DocIcon className="ml-[9px] h-[18px] w-4 shrink-0" />
                    <span className="ml-2 whitespace-nowrap text-[11px] font-bold">3DP-ParametricHinge-R1C51</span>
                  </li>
                  <TreeRow depth={1} line="M10 0v24M10 12h8" icon={<SheetIcon />}>Spreadsheet</TreeRow>
                  <TreeRow depth={1} kind="closed" line="M10 0v24M10 12h8" icon={<SmallBody />}>BASE</TreeRow>
                  <TreeRow depth={1} kind="closed" line="M10 0v24M10 12h8" icon={<SmallBody />}>ARM</TreeRow>
                  <TreeRow depth={1} kind="closed" line="M10 0v24M10 12h8" icon={<SmallBody />}>PIN</TreeRow>
                  <TreeRow depth={1} kind="open" line="M10 0v24" off icon={<SmallBody grey />}>DIMENSIONS</TreeRow>
                  <TreeRow depth={2} kind="closed" line="M10 0v24M10 12h8" off icon={<OriginIcon />}>Origin003</TreeRow>
                  <TreeRow depth={2} line="M10 0v12h8" off icon={<DimIcon />}>Dimmension_Arm</TreeRow>
                </ul>
              </div>
              <VBar thumb="h-[150px] w-2" />
            </div>
            <div className="ml-[3px] flex w-[214px] shrink-0">
              <HBar thumb="h-1.5 w-[88px]" className="grow" />
              <div className="w-3.5 border border-[#1c1f23]" />
            </div>
            <div className="flex h-1.5 shrink-0 items-center justify-center gap-px pr-1">
              {[0, 1, 2, 3, 4, 5].map((k) => <span key={k} className="h-0.5 w-0.5 bg-[#74787c]" />)}
            </div>
            <div className="grow" />
            <HBar thumb="h-1.5 w-[163px]" className="ml-[3px] w-[214px] border-b border-r border-[#54585c]" />
            <div className="flex shrink-0 gap-2 pb-1 pt-[5px]" role="tablist">
              <button type="button" role="tab" className="h-[23px] w-[46px] rounded-r bg-[#454a52] pr-1 text-[11px] text-[#d5d8db]">View</button>
              <button type="button" role="tab" aria-selected="true" className="h-[23px] w-[49px] rounded border border-[#26456f] bg-[#1d3148] text-[11px]">Data</button>
            </div>
          </section>
          <section className="flex h-40 shrink-0 flex-col border-t-4 border-[#282c33]">
            <DockTitle title="Tasks" />
            <div className="flex min-h-0 grow">
              <div className="min-w-0 grow pl-0.5 pr-2">
                <button type="button" className="flex h-8 w-full items-center border-b-[3px] border-[#43474d] pl-1.5 pt-2 text-[12px] font-bold">
                  <I className="h-3.5 w-3.5"><Prim a={B2} b={B3} c={B1} /></I>
                  <span className="ml-[3px] grow text-left">Start Part</span>
                  <Tri d="up" className="mr-2" />
                </button>
                <a href="#create-body" className="ml-[29px] mt-3 flex h-5 items-center gap-[3px] text-[11px]">
                  <SmallBody className="h-[13px] w-[13px]" />Create body
                </a>
              </div>
              <VBar thumb="h-full w-2" />
            </div>
          </section>
        </aside>

        <main className="flex min-w-0 grow flex-col">
          <div className="relative min-h-0 grow bg-[#0c0f14]">
            <Model />
            <NavCube />
          </div>
          <div className="flex h-[35px] shrink-0 items-end gap-2 pl-1" role="tablist">
            <div className="flex h-[31px] w-[106px] items-center rounded-md bg-[#454a52] pl-3.5 pr-2">
              <svg viewBox="0 0 16 16" className="h-4 w-4 shrink-0" aria-hidden="true">
                <path d="M0 3c0-2 1-3 3-3h12v3l-2 4-8 9H0z" fill="#d83a36" />
                <path d="M9 5l2-2 4 1-1 3 2 2-2 2 0 3-3-1-2 3-3-2 1-3z" fill="#3f7ac2" />
                <path d="M4 2h8v3H7v2h4v3H7v4H4z" fill="#fff" />
              </svg>
              <button type="button" role="tab" className="ml-2.5 grow text-left text-[11px] text-[#d5d8db]">Start</button>
              <button type="button" aria-label="Close Start">
                <svg viewBox="0 0 12 12" className="h-3 w-3" stroke="#8f9398" strokeWidth="1.800"><path d="M1 1l10 10M11 1L1 11" /></svg>
              </button>
            </div>
            <div className="flex h-[31px] w-[235px] items-center rounded-md border border-[#26456f] bg-[#1d3148] pl-3 pr-2">
              <DocIcon className="h-3.5 w-4 shrink-0" />
              <button type="button" role="tab" aria-selected="true" className="ml-2.5 grow whitespace-nowrap text-left text-[11px]">3DP-ParametricHinge-R1C51 : 1</button>
              <button type="button" aria-label="Close document">
                <svg viewBox="0 0 12 12" className="h-3 w-3" stroke="#8f9398" strokeWidth="1.800"><path d="M1 1l10 10M11 1L1 11" /></svg>
              </button>
            </div>
          </div>
        </main>
      </div>
    </div>
  );
}
